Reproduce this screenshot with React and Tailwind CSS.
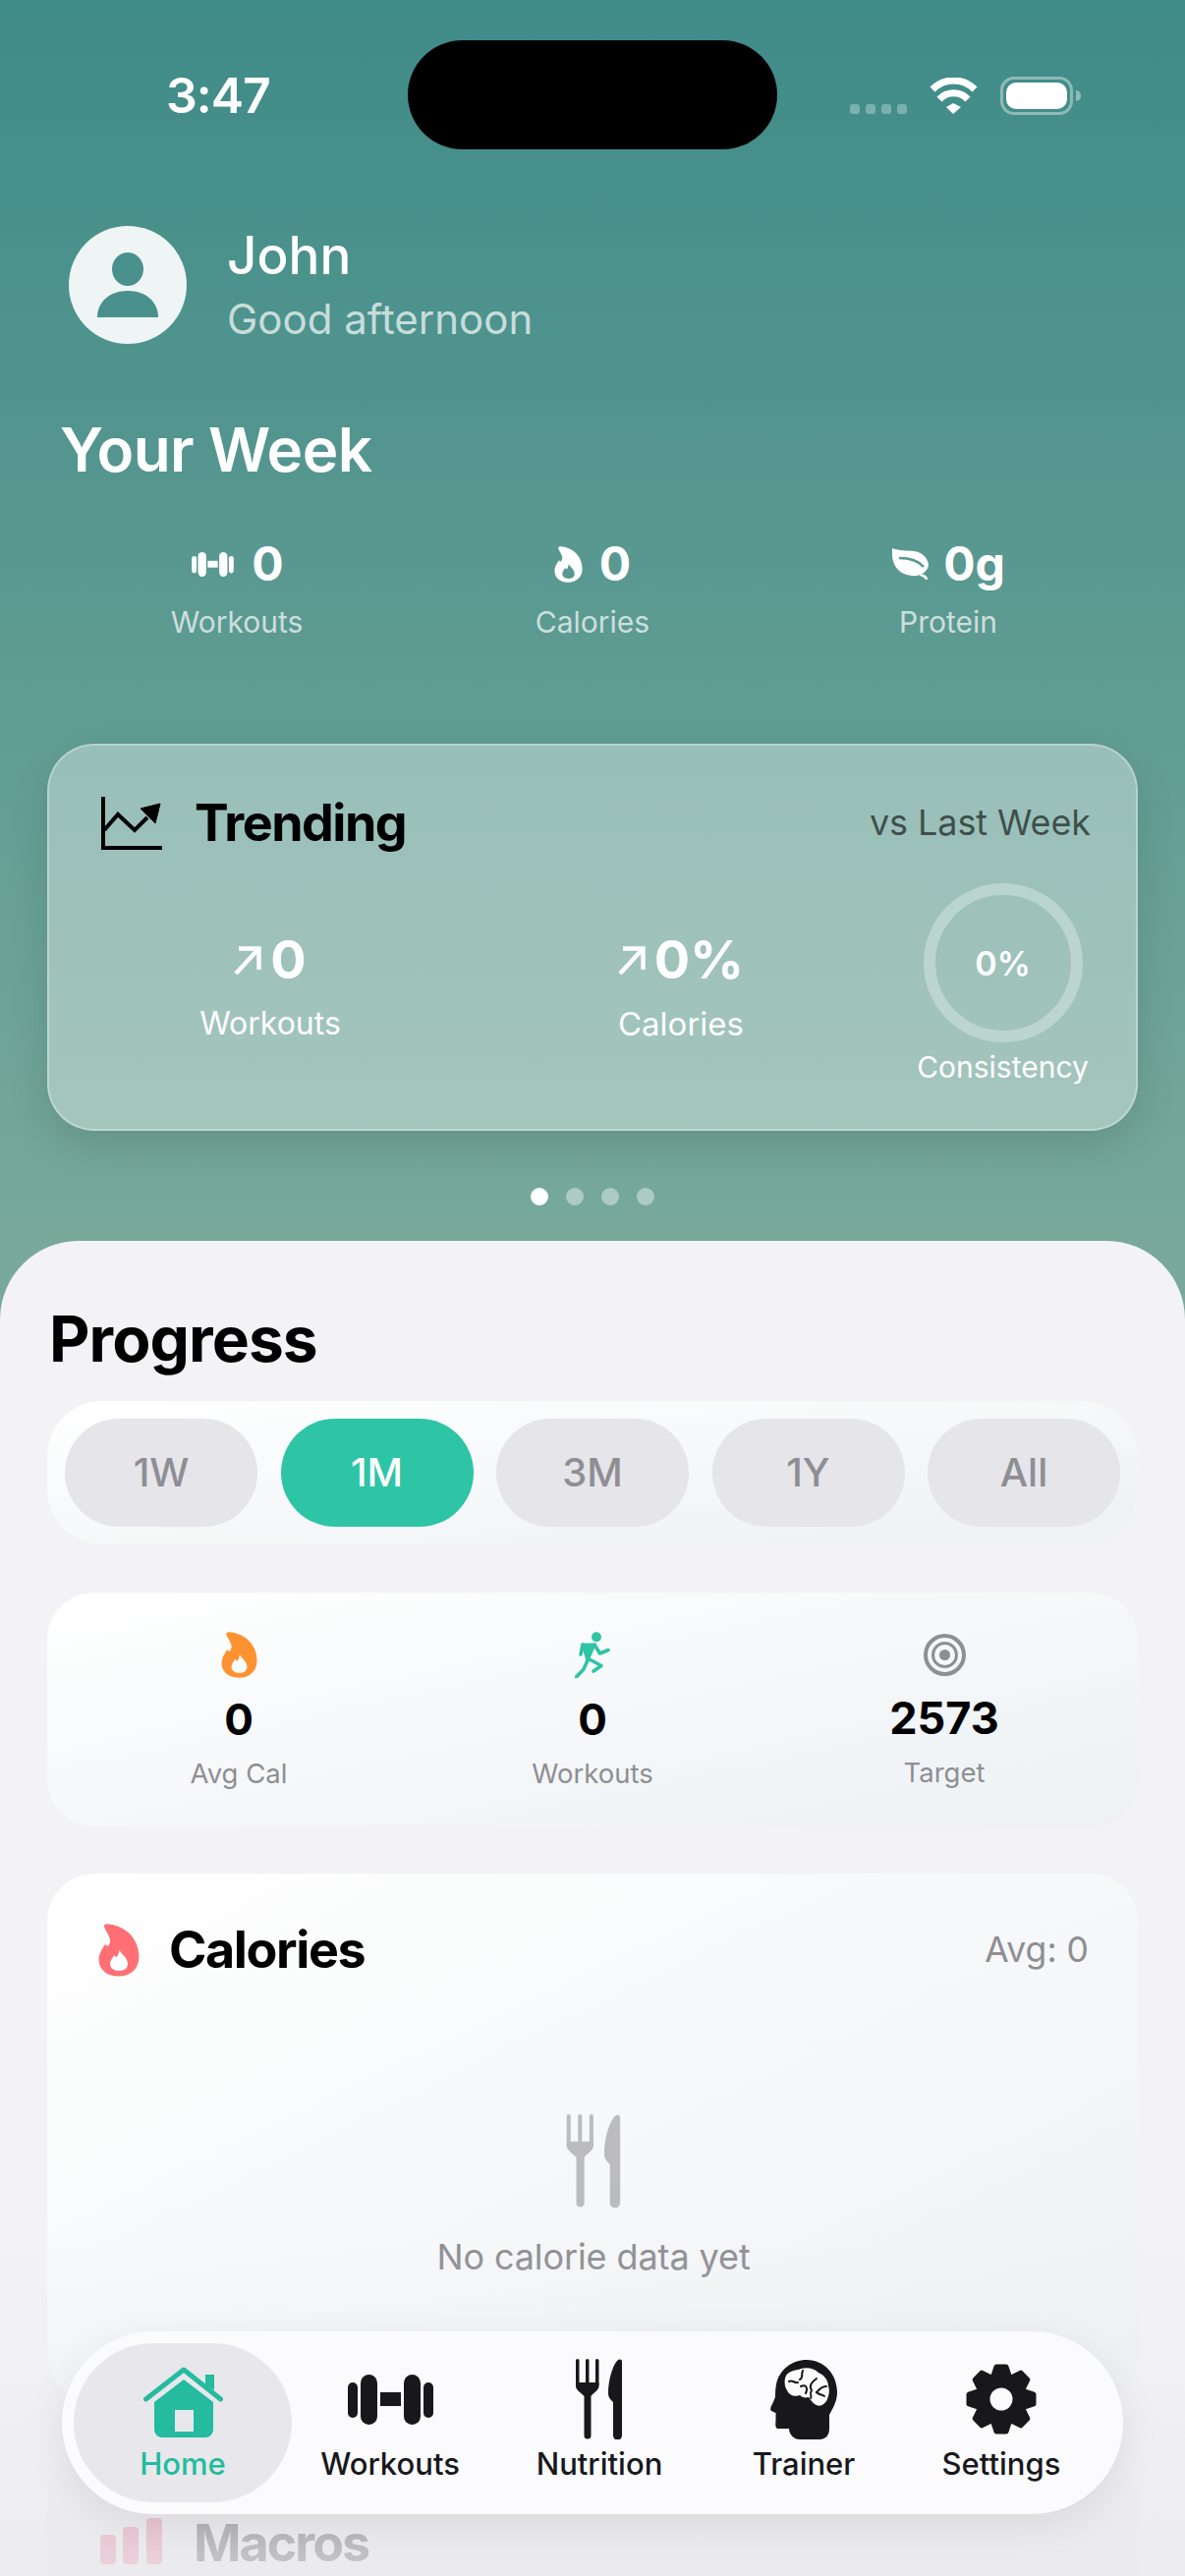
import React from "react";

const Flame = ({ className }) => (
  <svg viewBox="0 0 70 135" preserveAspectRatio="none" className={className} fill="currentColor">
    <path
      fillRule="evenodd"
      d="M16 1C40 3 69 30 69 85C69 115 55 134 34 134C14 134 1 116 1 92C1 75 8 62 12 52C15 60 18 58 20 46C21 32 12 18 10 8C9 3 12 0 16 1ZM36 66C37 76 50 84 50 102C50 114 44 120 35 120C26 120 20 113 20 102C20 94 24 88 27 80C29 84 31 86 32 84C34 80 35 72 36 66Z"
    />
  </svg>
);

const Dumbbell = ({ className }) => (
  <svg viewBox="0 0 87 51" className={className} fill="currentColor">
    <rect x="0" y="8" width="10" height="36" rx="5" />
    <rect x="13" y="0" width="17" height="51" rx="8.5" />
    <rect x="33" y="18" width="21" height="14" />
    <rect x="57" y="0" width="17" height="51" rx="8.5" />
    <rect x="77" y="8" width="10" height="36" rx="5" />
  </svg>
);

const Utensils = ({ className }) => (
  <svg viewBox="0 0 48 82" className={className} fill="currentColor">
    <rect x="0" y="0" width="3.5" height="28" rx="1.75" />
    <rect x="10" y="0" width="3.5" height="28" rx="1.75" />
    <rect x="20" y="0" width="3.5" height="28" rx="1.75" />
    <path d="M0 24H23.5V28C23.5 32 16 36 15.5 38V78a3.5 3.5 0 0 1-7 0V38C7.5 36 0 32 0 28Z" />
    <path d="M47 3V78a4.5 4.5 0 0 1-9 0V44C35 41 33 39 33 35C33 22 37 8 42 2C44 0 47 0 47 3Z" />
  </svg>
);

const Arrow = ({ className }) => (
  <svg viewBox="0 0 28 30" className={className} fill="none" stroke="currentColor" strokeWidth="4.4">
    <path d="M2 29L24 5" />
    <path d="M5 3.5H25.5V25" />
  </svg>
);

const navItems = ["Workouts", "Nutrition", "Trainer", "Settings"];

export default function App() {
  return (
    <div className="relative w-[1206px] h-[2622px] overflow-hidden flex flex-col bg-[linear-gradient(180deg,#3f8b88_0px,#78a99b_1263px)] font-[Inter,sans-serif] antialiased">
      {/* Status bar */}
      <div className="flex h-[156px] pt-[67px] pl-[169px] pr-[106px] items-start justify-between text-white">
        <span className="text-[50px] leading-[60px] font-semibold tracking-[-1px]">3:47</span>
        <div className="flex items-start mt-[11px]">
          <div className="flex gap-[6px] mt-[28px] mr-[22px]">
            <div className="w-[10px] h-[10px] rounded-[3px] bg-white/30" />
            <div className="w-[10px] h-[10px] rounded-[3px] bg-white/30" />
            <div className="w-[10px] h-[10px] rounded-[3px] bg-white/30" />
            <div className="w-[10px] h-[10px] rounded-[3px] bg-white/30" />
          </div>
          <svg viewBox="0 0 51 37" className="w-[51px] h-[37px] mt-[1px]" fill="none" stroke="white" strokeWidth="7">
            <path d="M4 12A30 30 0 0 1 47 12" />
            <path d="M11 22A20 20 0 0 1 40 22" />
            <path d="M18 30L25 26L33 30L25 37Z" fill="white" strokeWidth="0" />
          </svg>
          <div className="ml-[22px] w-[74px] h-[39px] rounded-[14px] border-[3px] border-white/40 p-[3px]">
            <div className="w-full h-full rounded-[10px] bg-white" />
          </div>
          <div className="ml-[3px] mt-[14px] w-[5px] h-[11px] rounded-r-full bg-white/40" />
        </div>
      </div>
      <div className="absolute left-[415px] top-[41px] w-[376px] h-[111px] rounded-[56px] bg-black" />

      {/* Profile */}
      <div className="flex items-center mt-[74px] pl-[70px]">
        <div className="w-[120px] h-[120px] rounded-full bg-[#eef5f4] flex items-center justify-center">
          <svg viewBox="0 0 62 66" className="w-[62px] h-[66px]" fill="#4a908c">
            <ellipse cx="31" cy="17" rx="16" ry="17" />
            <path d="M0 66C0 50 13 39 31 39C49 39 62 50 62 66Z" />
          </svg>
        </div>
        <div className="ml-[41px] flex flex-col">
          <span className="text-[53px] leading-[60px] font-medium text-white">John</span>
          <span className="text-[42px] leading-[50px] mt-[10px] text-white/70">Good afternoon</span>
        </div>
      </div>

      {/* Your Week */}
      <h1 className="mt-[72px] pl-[61px] text-[62px] leading-[72px] font-semibold tracking-[-0.6px] text-white">Your Week</h1>
      <div className="mt-[54px] px-[60px] grid grid-cols-3 text-white">
        <div className="flex flex-col items-center">
          <div className="flex items-center h-[52px]">
            <Dumbbell className="w-[47px] h-[25px] mr-[16px]" />
            <span className="text-[48px] leading-[52px] font-bold">0</span>
          </div>
          <span className="mt-[15px] text-[30px] leading-[36px] text-white/70">Workouts</span>
        </div>
        <div className="flex flex-col items-center">
          <div className="flex items-center h-[52px]">
            <Flame className="w-[29px] h-[37px] mr-[17px]" />
            <span className="text-[48px] leading-[52px] font-bold">0</span>
          </div>
          <span className="mt-[15px] text-[30px] leading-[36px] text-white/70">Calories</span>
        </div>
        <div className="flex flex-col items-center">
          <div className="flex items-center h-[52px]">
            <svg viewBox="0 0 38 32" className="w-[38px] h-[32px] mr-[15px]" fill="white">
              <path d="M1 0C8 3 16 2 23 3C32 4 37 10 38 17C37 24 30 29 21 28C9 27 2 19 1 8Z" />
              <path d="M30 26C34 27 37 28 37 32L35 32C34 30 32 29 29 28Z" />
              <path d="M8 10C18 10 27 12 33 19" fill="none" stroke="#56968f" strokeWidth="2.5" />
            </svg>
            <span className="text-[48px] leading-[52px] font-bold">0g</span>
          </div>
          <span className="mt-[15px] text-[30px] leading-[36px] text-white/70">Protein</span>
        </div>
      </div>

      {/* Trending card */}
      <div className="mt-[106px] mx-[48px] h-[394px] rounded-[48px] border-2 border-white/30 bg-white/35 shadow-[0_16px_40px_rgba(0,0,0,0.12)] pt-[52px] pl-[53px] pr-[46px] flex flex-col">
        <div className="flex items-center justify-between h-[54px]">
          <div className="flex items-center">
            <svg viewBox="0 0 63 54" className="w-[63px] h-[54px]" fill="none" stroke="black" strokeWidth="4">
              <path d="M2 0V52H62" />
              <path d="M3 34L17 18L34 34L47 21" />
              <path d="M60 7L40 12L55 27Z" fill="black" stroke="black" strokeWidth="1" />
            </svg>
            <span className="ml-[32px] text-[52px] leading-[60px] font-bold tracking-[-1.5px] text-black">Trending</span>
          </div>
          <span className="-mt-[3px] text-[36px] leading-[44px] tracking-[-0.1px] text-black/60">vs Last Week</span>
        </div>
        <div className="flex mt-[34px] text-white">
          <div className="w-[344px] flex flex-col items-center pt-[50px]">
            <div className="flex items-center h-[56px]">
              <Arrow className="w-[28px] h-[30px] mr-[9px]" />
              <span className="text-[54px] leading-[56px] font-bold">0</span>
            </div>
            <span className="mt-[17px] text-[32px] leading-[40px]">Workouts</span>
          </div>
          <div className="w-[492px] flex flex-col items-center pt-[50px]">
            <div className="flex items-center h-[56px]">
              <Arrow className="w-[28px] h-[30px] mr-[9px]" />
              <span className="text-[54px] leading-[56px] font-bold">0%</span>
            </div>
            <span className="mt-[17px] text-[33px] leading-[40px]">Calories</span>
          </div>
          <div className="w-[177px] -ml-[7px] flex flex-col items-center">
            <div className="w-[162px] h-[162px] rounded-full border-[12px] border-white/30 flex items-center justify-center">
              <span className="text-[34px] font-semibold">0%</span>
            </div>
            <span className="mt-[5px] text-[30px] leading-[40px] whitespace-nowrap">Consistency</span>
          </div>
        </div>
      </div>

      {/* Page dots */}
      <div className="mt-[58px] flex justify-center gap-[18px] h-[18px]">
        <div className="w-[18px] h-[18px] rounded-full bg-white" />
        <div className="w-[18px] h-[18px] rounded-full bg-white/40" />
        <div className="w-[18px] h-[18px] rounded-full bg-white/40" />
        <div className="w-[18px] h-[18px] rounded-full bg-white/40" />
      </div>

      {/* Sheet */}
      <div className="mt-[36px] flex-1 rounded-t-[80px] bg-[#f2f2f7] px-[48px] pt-[62px] flex flex-col overflow-hidden">
        <h2 className="pl-[2px] text-[64px] leading-[76px] font-bold tracking-[-0.9px] text-black">Progress</h2>

        <div className="mt-[25px] h-[146px] shrink-0 rounded-[56px] bg-gradient-to-br from-white to-[#edf1f4] px-[18px] py-[18px] flex justify-between">
          {["1W", "1M", "3M", "1Y", "All"].map((t) => (
            <div
              key={t}
              className={
                t === "1M"
                  ? "w-[196px] rounded-[55px] bg-[#2ec4a6] text-white flex items-center justify-center text-[40px] font-medium"
                  : "w-[196px] rounded-[55px] bg-[#e5e5ea] text-[#8e8e93] flex items-center justify-center text-[40px] font-medium"
              }
            >
              {t}
            </div>
          ))}
        </div>

        <div className="mt-[49px] h-[238px] shrink-0 rounded-[48px] bg-gradient-to-br from-white to-[#edf1f4] grid grid-cols-3 pt-[40px] px-[15px]">
          <div className="flex flex-col items-center">
            <Flame className="w-[37px] h-[47px] text-[#ff9230]" />
            <span className="mt-[16px] text-[44px] leading-[52px] font-bold text-black">0</span>
            <span className="mt-[12px] text-[27.5px] leading-[34px] text-[#8e8e93]">Avg Cal</span>
          </div>
          <div className="flex flex-col items-center">
            <svg viewBox="0 0 36 47" className="w-[36px] h-[47px]" fill="none" stroke="#2ec4a6" strokeWidth="3.6" strokeLinecap="round" strokeLinejoin="round">
              <circle cx="22" cy="5.3" r="5" fill="#2ec4a6" stroke="none" />
              <path d="M8 13L20 13L13 29Z" fill="#2ec4a6" strokeWidth="3" />
              <path d="M8 13L6 23" />
              <path d="M20 13L25.5 22L34 18.5" />
              <path d="M13 29L9 38L1.5 46" />
              <path d="M13 27L27 34.5L19 40" />
            </svg>
            <span className="mt-[16px] text-[44px] leading-[52px] font-bold text-black">0</span>
            <span className="mt-[12px] text-[27.5px] leading-[34px] text-[#8e8e93]">Workouts</span>
          </div>
          <div className="flex flex-col items-center pr-[4px]">
            <svg viewBox="0 0 43 43" className="w-[43px] h-[47px]" fill="none" stroke="#8e8e93">
              <circle cx="21.5" cy="21.5" r="19.5" strokeWidth="4" />
              <circle cx="21.5" cy="21.5" r="12" strokeWidth="3" />
              <circle cx="21.5" cy="21.5" r="5.5" fill="#8e8e93" stroke="none" />
            </svg>
            <span className="mt-[15px] text-[45px] leading-[52px] font-bold text-black">2573</span>
            <span className="mt-[12px] text-[27.5px] leading-[34px] text-[#8e8e93]">Target</span>
          </div>
        </div>

        <div className="mt-[48px] h-[538px] shrink-0 rounded-[48px] bg-gradient-to-br from-white to-[#eef1f3] pt-[51px] pl-[52px] pr-[50px] flex flex-col">
          <div className="flex items-center justify-between h-[54px]">
            <div className="flex items-center">
              <Flame className="w-[42px] h-[54px] text-[#ff6f75]" />
              <span className="ml-[30px] text-[52px] leading-[60px] font-bold tracking-[-1.4px] text-black">Calories</span>
            </div>
            <span className="text-[35.5px] leading-[44px] text-[#8e8e93]">Avg: 0</span>
          </div>
          <div className="mt-[140px] flex flex-col items-center">
            <Utensils className="w-[57px] h-[95px] text-[#bcbcc0]" />
            <span className="mt-[28px] text-[36px] leading-[44px] tracking-[-0.1px] text-[#8e8e93]">No calorie data yet</span>
          </div>
        </div>

        <div className="mt-[48px] h-[300px] shrink-0 rounded-[48px] bg-gradient-to-b from-[#f2f2f6] to-[#dfdfe4] pt-[70px] pl-[54px] flex items-start">
          <svg viewBox="0 0 63 47" className="w-[63px] h-[47px]" fill="#e97a94">
            <rect x="0" y="17" width="16" height="30" rx="4" />
            <rect x="23" y="9" width="16" height="38" rx="4" />
            <rect x="47" y="0" width="16" height="47" rx="4" />
          </svg>
          <span className="ml-[32px] -mt-[4px] text-[52px] leading-[60px] font-bold tracking-[-2px] text-[#444449]">Macros</span>
        </div>
      </div>

      {/* Bottom fade */}
      <div className="absolute left-0 right-0 bottom-0 h-[340px] bg-gradient-to-b from-transparent to-[#ebebef]/80" />

      {/* Tab bar */}
      <div className="absolute left-[63px] top-[2373px] w-[1080px] h-[186px] rounded-[93px] bg-[#fbfbfe] shadow-[0_12px_40px_rgba(0,0,0,0.08)] pl-[12px] py-[12px] grid grid-cols-[222px_200px_226px_190px_212px]">
        <div className="rounded-[81px] bg-[#e8e8ec] flex flex-col items-center pt-[24px]">
          <svg viewBox="0 0 81 72" className="w-[81px] h-[72px]" fill="#24bb9e">
            <path d="M63 8H72V24L63 18Z" />
            <path d="M2.5 33L41 3L78.5 33" fill="none" stroke="#24bb9e" strokeWidth="5" strokeLinecap="round" strokeLinejoin="round" />
            <path
              fillRule="evenodd"
              d="M41 13L71 36V64a8 8 0 0 1-8 8H19a8 8 0 0 1-8-8V36ZM32 44V66H51V44Z"
            />
          </svg>
          <span className="mt-[9px] text-[31px] leading-[36px] font-medium text-[#24bb9e]">Home</span>
        </div>
        {navItems.map((label) => (
          <div key={label} className="flex flex-col items-center pt-[15px]">
            <div className="h-[84px] flex items-center justify-center">
              {label === "Workouts" && <Dumbbell className="w-[87px] h-[51px] text-[#18181b]" />}
              {label === "Nutrition" && <Utensils className="w-[48px] h-[82px] text-[#18181b]" />}
              {label === "Trainer" && (
                <svg viewBox="0 0 68 81" className="w-[68px] h-[81px]" fill="#18181b">
                  <path d="M37 0C55 0 68 15 68 33C68 43 63 50 60 56L60 70C60 77 56 81 50 81L30 81C24 81 19 76 19 70L8 70C5 70 5 66 5.5 62L5.5 54L1 52C-1 50 1 47 2.5 44L5 38C5 34 5 30 6 25C9 10 22 0 37 0Z" />
                  <path
                    fill="#fbfbfe"
                    d="M16 16C20 10 27 11 31 9C38 7 45 9 49 13C54 15 59 20 59 27C61 32 59 37 58 40C56 45 51 48 47 46C44 45 41 41 39 38C35 39 32 38 30 36C25 38 19 36 17 31C14 27 14 20 16 16Z"
                  />
                  <path
                    fill="none"
                    stroke="#18181b"
                    strokeWidth="2"
                    strokeLinecap="round"
                    d="M19 22C23 20 24 24 28 23M33 11C31 15 34 18 30 20M31 27C35 25 39 27 36 34M47 19C42 23 39 26 42 31C39 35 43 37 41 39M57 27C52 27 50 30 47 33C50 36 52 35 55 37"
                  />
                </svg>
              )}
              {label === "Settings" && (
                <svg viewBox="0 0 72 72" className="w-[72px] h-[72px]" fill="#18181b">
                  <circle cx="36" cy="36" r="19" fill="none" stroke="#18181b" strokeWidth="15" />
                  {[0, 45, 90, 135, 180, 225, 270, 315].map((a) => (
                    <path
                      key={a}
                      d="M31 3H41L45 15H27Z"
                      stroke="#18181b"
                      strokeWidth="5"
                      strokeLinejoin="round"
                      transform={`rotate(${a} 36 36)`}
                    />
                  ))}
                </svg>
              )}
            </div>
            <span className="mt-[6px] text-[31px] leading-[36px] font-medium text-[#18181b]">{label}</span>
          </div>
        ))}
      </div>
    </div>
  );
}
